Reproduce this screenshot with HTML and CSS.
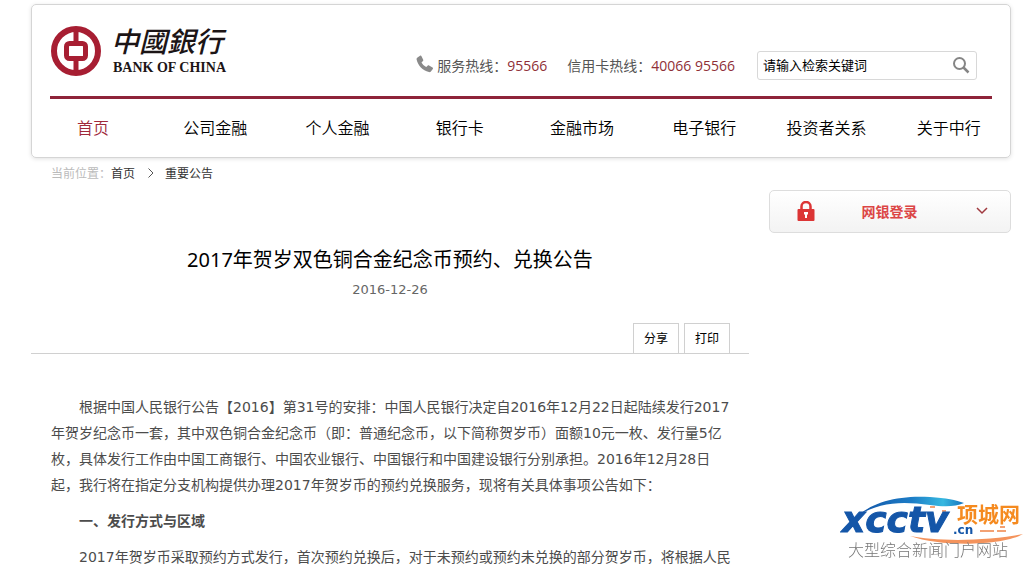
FILE: index.html
```html
<!DOCTYPE html>
<html lang="zh-CN">
  <head>
    <meta charset="UTF-8" />
    <meta name="viewport" content="width=device-width, initial-scale=1.0" />
    <title>2017年贺岁双色铜合金纪念币预约、兑换公告</title>
    <link rel="stylesheet" href="styles.css">
  </head>
  <body>
    <header class="header">
      <div class="header-top">
        <a class="logo" href="#">
          <svg class="logo-mark" viewBox="0 0 50 50" aria-hidden="true">
            <circle cx="25" cy="25" r="22" fill="none" stroke="#a71e32" stroke-width="6" />
            <path d="M25 3v13M25 34v13" stroke="#a71e32" stroke-width="5" />
            <rect x="15.500" y="17.500" width="19" height="15" rx="3" fill="none" stroke="#a71e32" stroke-width="5" />
          </svg>
          <span class="logo-text">
            <span class="logo-cn">中國銀行</span>
            <span class="logo-en">BANK OF CHINA</span>
          </span>
        </a>
        <div class="hotlines">
          <svg class="phone-icon" viewBox="0 0 18 18" aria-hidden="true">
            <path d="M1.500 2.500 4 .8c.6-.4 1.200-.2 1.500.4l1.700 3.500c.3.600.1 1.100-.4 1.500L5.500 7.200c.9 2 2.500 3.700 4.700 4.800l1.400-1.300c.4-.4 1-.5 1.500-.2l3.400 2c.6.4.7 1 .3 1.500l-1.900 2.500c-.5.600-1.200.8-2 .6C6.500 15.600 2 10.700.6 4.600c-.2-.9.1-1.600.9-2.100z" fill="#8a8a8a" />
          </svg>
          <span>服务热线：<b>95566</b></span>
          <span class="card-line">信用卡热线：<b>40066 95566</b></span>
        </div>
        <form class="search">
          <input type="text" name="keyword" value="请输入检索关键词" aria-label="请输入检索关键词" />
          <button type="button" aria-label="搜索">
            <svg viewBox="0 0 18 18" aria-hidden="true">
              <circle cx="7.500" cy="7.500" r="5.500" fill="none" stroke="#858585" stroke-width="2" />
              <path d="m11.500 11.500 5 5" stroke="#858585" stroke-width="2.500" />
            </svg>
          </button>
        </form>
      </div>
      <nav class="nav">
        <a class="active" href="#">首页</a>
        <a href="#">公司金融</a>
        <a href="#">个人金融</a>
        <a href="#">银行卡</a>
        <a href="#">金融市场</a>
        <a href="#">电子银行</a>
        <a href="#">投资者关系</a>
        <a href="#">关于中行</a>
      </nav>
    </header>

    <div class="breadcrumb">
      <span class="label">当前位置：</span>
      <a href="#">首页</a>
      <svg class="crumb-arrow" viewBox="0 0 6 10" aria-hidden="true">
        <path d="m.5.5 4.500 4.500-4.500 4.500" fill="none" stroke="#555" />
      </svg>
      <a href="#">重要公告</a>
    </div>

    <div class="main">
      <article class="article">
        <h1>2017年贺岁双色铜合金纪念币预约、兑换公告</h1>
        <time datetime="2016-12-26">2016-12-26</time>
        <div class="tools">
          <button type="button">分享</button>
          <button type="button">打印</button>
        </div>
        <div class="content">
          <p>根据中国人民银行公告【2016】第31号的安排：中国人民银行决定自2016年12月22日起陆续发行2017年贺岁纪念币一套，其中双色铜合金纪念币（即：普通纪念币，以下简称贺岁币）面额10元一枚、发行量5亿枚，具体发行工作由中国工商银行、中国农业银行、中国银行和中国建设银行分别承担。2016年12月28日起，我行将在指定分支机构提供办理2017年贺岁币的预约兑换服务，现将有关具体事项公告如下：</p>
          <h2>一、发行方式与区域</h2>
          <p>2017年贺岁币采取预约方式发行，首次预约兑换后，对于未预约或预约未兑换的部分贺岁币，将根据人民</p>
        </div>
      </article>

      <aside>
        <button type="button" class="login">
          <svg class="lock-icon" viewBox="0 0 18 20" aria-hidden="true">
            <path d="M4.500 9V5.500a4.500 4.500 0 0 1 9 0V9" fill="none" stroke="#dc3535" stroke-width="2.500" />
            <rect x=".5" y="8" width="17" height="12" rx="1" fill="#dc3535" />
            <path d="M7 11h4v2l-1 1v3H8v-3l-1-1z" fill="#fff" />
          </svg>
          <span>网银登录</span>
          <svg class="down-icon" viewBox="0 0 12 8" aria-hidden="true">
            <path d="m1 1 5 5 5-5" fill="none" stroke="#a0393f" stroke-width="1.500" />
          </svg>
        </button>
      </aside>
    </div>

    <!-- site mark in the corner -->
    <svg class="site-mark" viewBox="0 0 184 68" role="img" aria-label="xcctv.cn 项城网">
      <defs>
        <linearGradient id="swoosh">
          <stop offset="0" stop-color="#1456a8" />
          <stop offset="0.5" stop-color="#1c7cc6" />
          <stop offset="0.8" stop-color="#36b8e0" />
          <stop offset="1" stop-color="#1672bd" />
        </linearGradient>
      </defs>
      <path d="M19 19C34 5 62-1 90 1c16 1 26 3 34 6-9 4-20 4-34 2C62 5 40 6 19 19z" fill="url(#swoosh)" />
      <path d="M70 40c24 5 72 6 113-2-18 11-80 14-113 2z" fill="#f4935c" />
      <path d="M140 35h14m3 0h9m-6-4h5M90 11h5m7 4h4" stroke="#f3a274" stroke-width="2" />
      <text class="mark-name" x="2" y="36">xcctv</text>
      <text class="mark-cn" x="113" y="38">.cn</text>
      <text class="mark-city" x="117" y="26">项城网</text>
      <text class="mark-tag" x="8" y="60">大型综合新闻门户网站</text>
    </svg>
  </body>
</html>
```

FILE: styles.css
```css
* {
  box-sizing: border-box;
}

body {
  margin: 0;
  padding: 4px 13px 0 31px;
  font-family: "Noto Sans", "Noto Sans CJK SC", sans-serif;
  font-size: 12px;
  color: #333;
  background: #fff;
}

a {
  color: inherit;
  text-decoration: none;
}

button,
input {
  font-family: inherit;
}

.header {
  border: 1px solid #d5d5d5;
  border-radius: 5px;
  box-shadow: 0 1px 4px rgba(0, 0, 0, 0.12);
}

.header-top {
  display: flex;
  align-items: flex-end;
  height: 94px;
  margin: 0 18px;
  padding-bottom: 16px;
  border-bottom: 3px solid #8e2339;
}

.logo {
  display: flex;
  gap: 10px;
  margin: 0 auto 0 1px;
}

.logo-mark {
  width: 50px;
  height: 50px;
}

.logo-text {
  display: flex;
  flex-direction: column;
  color: #1c1516;
  white-space: nowrap;
}

.logo-cn {
  font-size: 28px;
  font-style: italic;
  font-weight: 500;
  line-height: 30px;
}

.logo-en {
  padding-left: 2px;
  font-family: "Liberation Serif", serif;
  font-size: 14px;
  font-weight: bold;
  line-height: 24px;
}

.hotlines {
  display: flex;
  align-items: center;
  height: 30px;
  font-family: "Open Sans", "Noto Sans CJK SC", sans-serif;
  font-size: 14px;
  color: #555;
  white-space: nowrap;
}

.hotlines b {
  font-weight: normal;
  color: #8f2f37;
}

.phone-icon {
  width: 18px;
  height: 18px;
  margin: 0 3px 2px 0;
}

.card-line {
  margin-left: 20px;
}

.search {
  display: flex;
  width: 220px;
  height: 29px;
  margin: 0 15px 0 22px;
  border: 1px solid #d8d8d8;
  border-radius: 3px;
}

.search input {
  flex: 1;
  min-width: 0;
  padding: 0 5px 2px;
  border: 0;
  background: none;
  font-size: 13px;
  color: #000;
}

.search button {
  width: 30px;
  padding: 0 0 2px;
  border: 0;
  background: none;
}

.search svg {
  display: block;
  width: 18px;
  height: 18px;
  margin: 0 auto;
}

.nav {
  display: grid;
  grid-template-columns: repeat(8, 1fr);
  font-size: 16px;
  font-weight: 350;
  line-height: 58px;
  text-align: center;
  color: #000;
}

.nav .active {
  color: #a0293b;
}

.breadcrumb {
  display: flex;
  align-items: center;
  height: 30px;
  margin-bottom: 2px;
  padding-left: 20px;
}

.breadcrumb .label {
  color: #bbb;
}

.crumb-arrow {
  width: 6px;
  height: 10px;
  margin: 0 11px 0 13px;
}

.main {
  display: grid;
  grid-template-columns: 1fr 242px;
  gap: 20px;
}

.article {
  padding-top: 55px;
}

.article h1 {
  margin: 0;
  font-size: 20px;
  font-weight: normal;
  line-height: 30px;
  text-align: center;
  color: #000;
}

.article time {
  display: block;
  font-family: "DejaVu Sans", sans-serif;
  font-size: 13px;
  line-height: 30px;
  text-align: center;
  color: #666;
}

.tools {
  display: flex;
  justify-content: flex-end;
  gap: 5px;
  margin-top: 18px;
  padding-right: 19px;
  border-bottom: 1px solid #d0d0d0;
}

.tools button {
  width: 46px;
  height: 30px;
  padding: 0 0 2px;
  border: 1px solid #d0d0d0;
  border-bottom: 0;
  background: #fff;
  font-size: 12px;
  color: #000;
}

.content {
  padding: 40px 16px 0 20px;
  font-family: "DejaVu Sans", "Noto Sans CJK SC", sans-serif;
  font-size: 14px;
  line-height: 26px;
  color: #4c4c4c;
}

.content p,
.content h2 {
  margin: 0 0 10px;
  text-indent: 2em;
}

.content h2 {
  font-size: inherit;
}

.login {
  display: flex;
  align-items: center;
  width: 100%;
  height: 43px;
  padding: 0 22px 2px 27px;
  border: 1px solid #ddd;
  border-radius: 5px;
  background: linear-gradient(#fff, #f3f3f3);
  font-size: 14px;
  font-weight: bold;
  color: #dc4545;
}

.login span {
  flex: 1;
}

.lock-icon {
  width: 18px;
  height: 20px;
}

.down-icon {
  width: 12px;
  height: 8px;
  margin-left: 12px;
}

.site-mark {
  position: fixed;
  right: 0;
  bottom: 0;
  width: 184px;
  height: 68px;
}

.mark-name,
.mark-cn {
  font-family: "DejaVu Sans", sans-serif;
  font-weight: bold;
  fill: #1456a8;
}

.mark-name {
  font-size: 36px;
  font-style: italic;
  stroke: #1456a8;
}

.mark-cn {
  font-size: 12px;
}

.mark-city {
  font-size: 21px;
  font-weight: bold;
  fill: #f58a1f;
}

.mark-tag {
  font-size: 16px;
  font-weight: 300;
  fill: #777;
}
```
